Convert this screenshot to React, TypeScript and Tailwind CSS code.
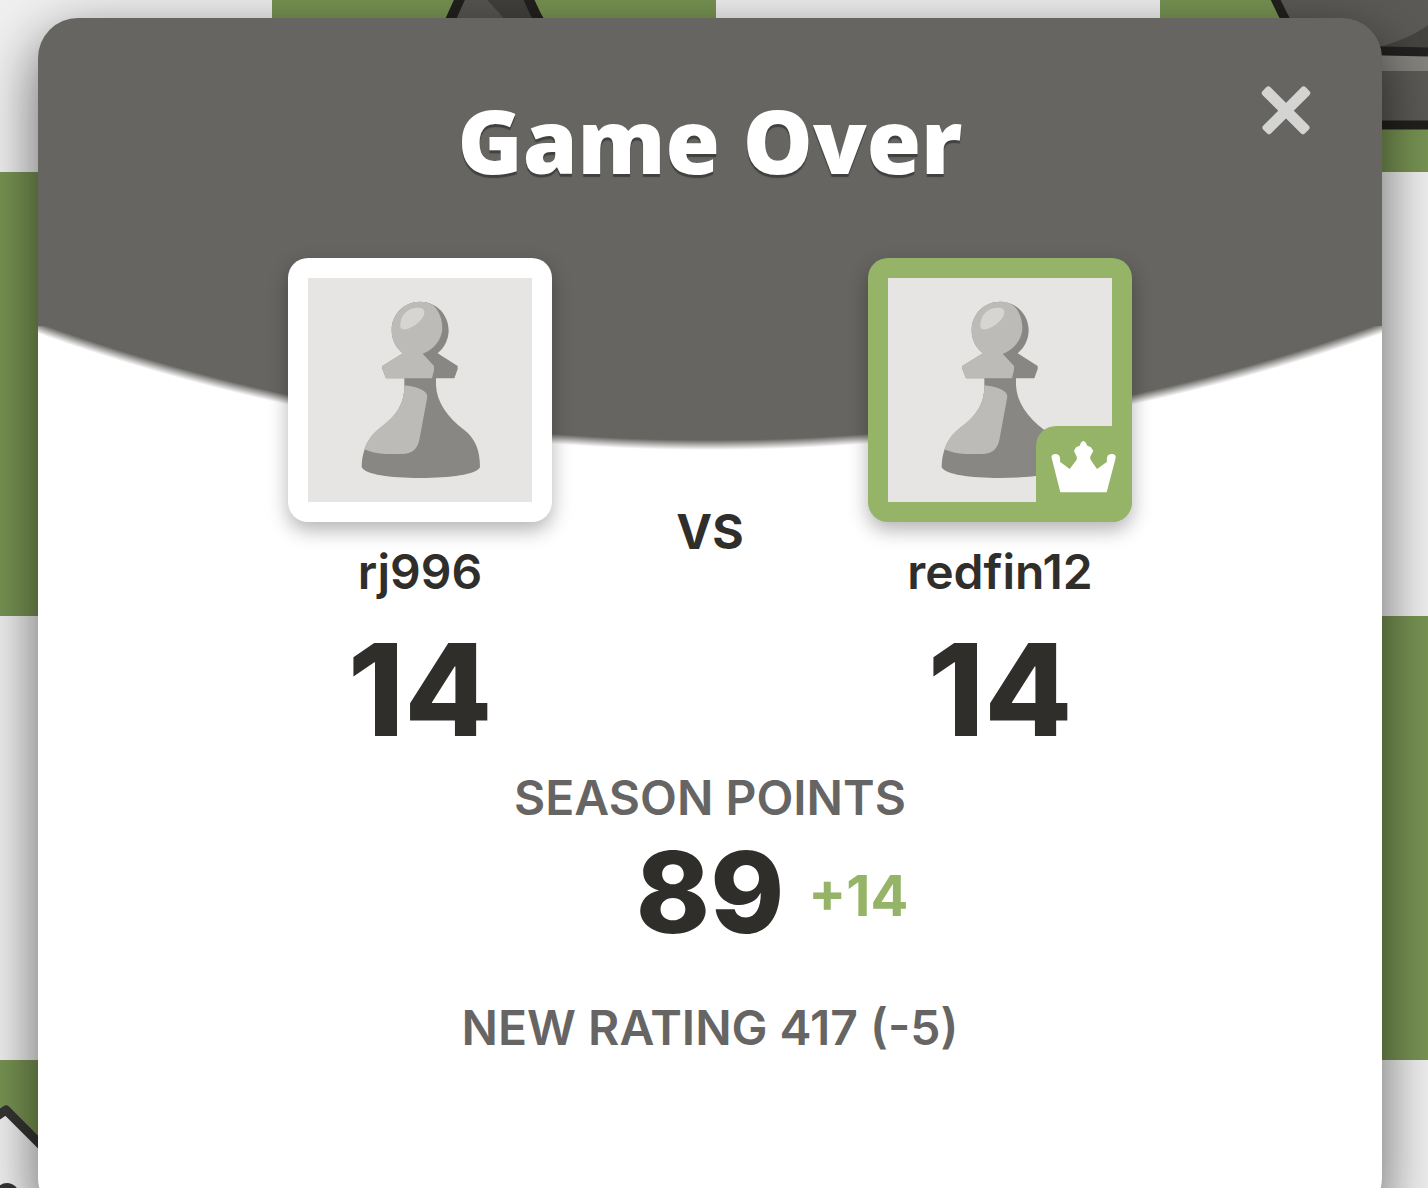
import React from "react";

function Square({ dark }: { dark: boolean }) {
  return <div className={dark ? "h-[444px] bg-[#789453]" : "h-[444px] bg-[#f0f0f0]"} />;
}

function Board() {
  const cells = Array.from({ length: 16 }, (_, i) => (i + Math.floor(i / 4)) % 2 === 1);
  return (
    <div className="absolute inset-0 overflow-hidden" aria-hidden="true">
      <div className="-mt-[272px] grid grid-cols-[repeat(4,444px)] justify-center pl-1">
        {cells.map((dark, i) => (
          <Square key={i} dark={dark} />
        ))}
      </div>
      <svg className="absolute top-0 left-[440px] h-6 w-28" viewBox="440 0 112 24">
        <path d="M463 -8 L442 36 H548 L528 -8Z" fill="#42413e" />
        <path d="M463 -8 L442 36 H520 L480 -8Z" fill="#575653" />
        <path d="M463 -8 L443 36 M526 -8 Q534 14 545 30" fill="none" stroke="#22211f" strokeWidth="10" />
      </svg>
      <svg className="absolute top-0 right-0 h-36 w-40" viewBox="1268 0 160 144">
        <path d="M1270 -6 L1300 48 L1390 50 L1428 51 V-6Z" fill="#5b5a56" />
        <path d="M1370 50 Q1412 38 1428 25 V52 H1370Z" fill="#454441" />
        <rect x="1340" y="56" width="88" height="16" fill="#84837e" />
        <rect x="1340" y="71" width="88" height="50" fill="#5b5a57" />
        <path d="M1273 -6 Q1280 10 1290 28 M1340 50 L1428 52 M1340 125 H1428" fill="none" stroke="#22211f" strokeWidth="9" />
      </svg>
      <svg className="absolute top-[1098px] left-0 h-[90px] w-14" viewBox="0 1098 56 90">
        <path d="M-6 1118 L6 1110 L56 1160 V1200 H-6Z" fill="#f1f1f1" stroke="#373533" strokeWidth="9" strokeLinejoin="round" />
        <circle cx="7" cy="1195" r="12" fill="#373533" />
      </svg>
    </div>
  );
}

function Pawn() {
  return (
    <svg viewBox="84 84 672 672" className="block size-56 bg-[#e6e5e3]" role="img" aria-label="Pawn avatar">
      <path
        d="M420 155 C468 155 506 193 506 241 C506 268 493 294 473 310 L533 348 L533 357 L523 385 H468 V405 C470 455 500 500 553 540 C585 565 600 600 600 652 C590 674 510 684 421 684 C330 684 256 674 245 652 C245 630 248 615 254 598 C263 572 277 552 303 532 C351 496 374 460 373 406 V385 H318 L307 357 V348 L369 310 C348 294 335 270 335 241 C335 193 372 155 420 155Z"
        fill="#888784"
      />
      <path
        d="M420 155 C436 155 450 159 461 167 C478 183 487 208 487 234 C487 268 460 300 428 311 L462 348 V360 L456 385 H318 L307 357 V348 L369 310 C348 294 335 270 335 241 C335 193 372 155 420 155Z"
        fill="#bcbbb7"
      />
      <path
        d="M373 406 C420 412 442 424 442 440 L418 570 C412 598 396 612 366 612 H318 C292 612 270 606 253 598 C262 572 276 552 302 532 C350 496 374 460 373 406Z"
        fill="#bcbbb7"
      />
      <path
        d="M361 228 C360 196 382 173 415 173 C427 173 433 177 433 188 C432 209 394 238 373 238 C364 238 361 235 361 228Z"
        fill="#d6d5d3"
      />
    </svg>
  );
}

function Crown() {
  return (
    <svg viewBox="528 528 288 288" className="size-24" aria-hidden="true">
      <path
        d="M601 727 L575 624 C573 616 579 612 588 612 C598 613 602 620 600 635 L629 657 L650 629 C651 623 651 620 648 616 L642 603 L648 592 L659 587 C662 578 666 574 670 573 C675 574 678 578 682 587 L693 592 L700 603 L693 616 C690 620 690 623 692 629 L711 657 L741 635 C739 620 743 613 754 612 C763 611 768 615 767 624 L740 727Z"
        fill="#fff"
      />
    </svg>
  );
}

function Player({ name, score, winner = false }: { name: string; score: number; winner?: boolean }) {
  return (
    <div className="flex w-[264px] flex-col items-center">
      <div
        className={
          winner
            ? "relative rounded-[20px] bg-[#95b467] p-5 shadow-[0_8px_20px_rgba(0,0,0,0.3)]"
            : "relative rounded-[20px] bg-white p-5 shadow-[0_8px_20px_rgba(0,0,0,0.3)]"
        }
      >
        <Pawn />
        {winner && (
          <div className="absolute right-0 bottom-0 size-24 rounded-tl-[20px] rounded-br-[20px] bg-[#95b467]">
            <Crown />
          </div>
        )}
      </div>
      <p className="mt-5 text-[48px] leading-[60px] font-semibold">{name}</p>
      <p className="mt-4 text-[128px] leading-[144px] font-extrabold">{score}</p>
    </div>
  );
}

export default function App() {
  return (
    <div className="relative h-screen overflow-hidden bg-[#ececec] pt-[18px] pr-[46px] pl-[38px] font-['Inter',sans-serif] text-[#302e2a]">
      <Board />
      <section
        role="dialog"
        aria-labelledby="result-title"
        className="relative rounded-[40px] bg-white bg-[linear-gradient(#666562,#666562),radial-gradient(circle_1996px_at_50%_-1564px,#666562_1986px,#fff_1996px)] bg-[length:100%_308px,100%_100%] bg-no-repeat pb-40 shadow-[0_20px_60px_rgba(0,0,0,0.6)]"
      >
        <button type="button" aria-label="Close" className="absolute top-[60px] right-[64px] size-16">
          <svg viewBox="0 0 64 64" className="size-16" fill="#d4d4d3">
            <rect x="2" y="27" width="60" height="11" rx="3" transform="rotate(45 32 32)" />
            <rect x="2" y="27" width="60" height="11" rx="3" transform="rotate(-45 32 32)" />
          </svg>
        </button>
        <h1
          id="result-title"
          className="pt-16 text-center font-['Open_Sans',sans-serif] text-[88px] leading-[116px] font-extrabold text-white [text-shadow:0_3px_1px_#40403e]"
        >
          Game Over
        </h1>
        <div className="mt-[60px] flex justify-center">
          <Player name="rj996" score={14} />
          <p className="mt-[244px] w-[316px] text-center text-[48px] leading-[60px] font-bold">VS</p>
          <Player name="redfin12" score={14} winner />
        </div>
        <div className="mt-[6px] text-center">
          <h2 className="text-[48px] leading-[60px] font-semibold text-[#666564]">SEASON POINTS</h2>
          <div className="mt-[6px] grid grid-cols-[1fr_auto_1fr] items-center gap-6">
            <p className="col-start-2 text-[112px] leading-[116px] font-extrabold">89</p>
            <p className="pt-2 text-left text-[56px] leading-[68px] font-bold text-[#95b467]">+14</p>
          </div>
          <p className="mt-12 text-[48px] leading-[60px] font-semibold text-[#666564]">NEW RATING 417 (-5)</p>
        </div>
      </section>
    </div>
  );
}
